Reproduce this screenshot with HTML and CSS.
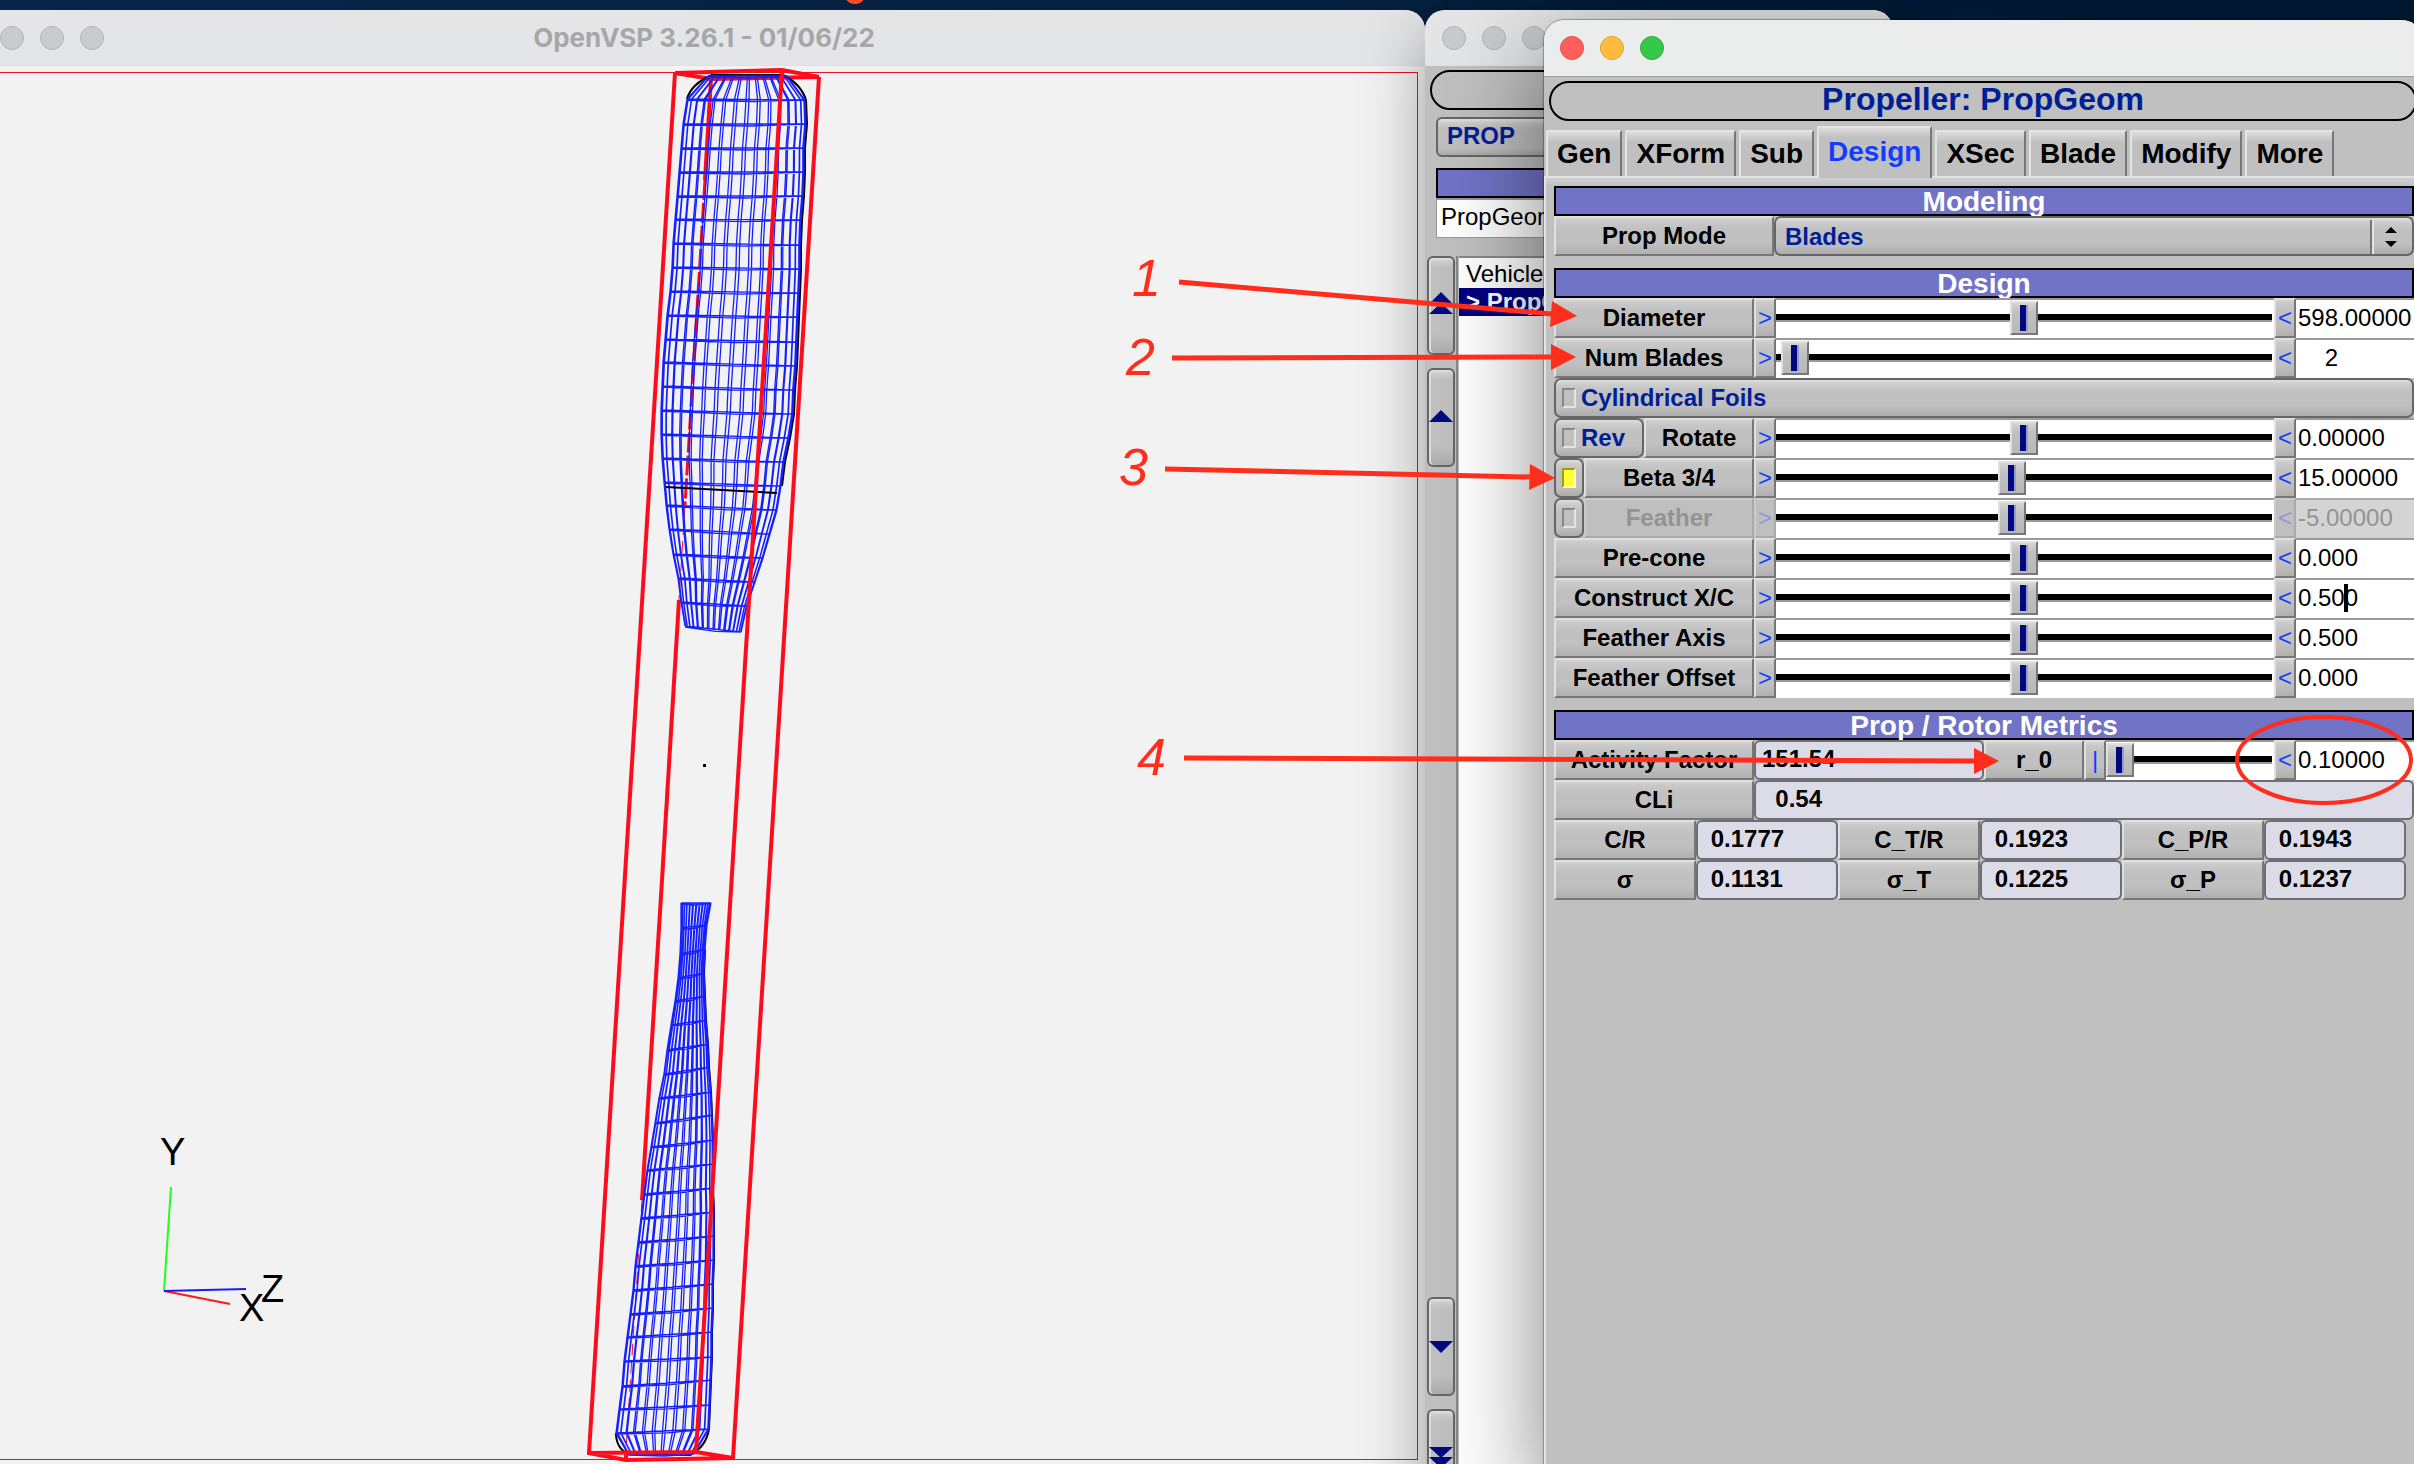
FILE: index.html
```html
<!DOCTYPE html>
<html lang="en">
<head>
<meta charset="utf-8">
<title>OpenVSP 3.26.1</title>
<link rel="stylesheet" href="styles.css">
</head>
<body>
<div class="desktop">
  <span class="menu-dot"></span>

  <section class="window scene-window">
    <header class="titlebar inactive">
      <span class="light"></span><span class="light"></span><span class="light"></span>
      <h1 class="window-title">OpenVSP 3.26.1 - 01/06/22</h1>
    </header>
    <svg class="scene" viewBox="-17 66 1442 1398" width="1442" height="1398" role="img" aria-label="Propeller wireframe">
      <rect x="-9" y="72" width="1426" height="1387" fill="none" stroke="#f01020" stroke-width="1" shape-rendering="crispEdges"/>
      <g class="box"><path d="M675 73L711 79L819 77M711 79L705 180M662 880L642 1200"/><path class="box-mid" d="M705 180L685 505"/><path d="M679 600L662 880"/><path class="box-far" d="M685 505L679 600M642 1200L626 1450"/></g>
      <g id="blades"></g>
      <g class="box">
        <path d="M675 73L782 70L819 77M675 73L589 1453L626 1460L733 1458L819 77M782 70L696 1452L733 1458M589 1453L696 1452M626 1450V1460"/>
      </g>
      <rect x="703" y="764" width="3" height="3"/>
      <g class="axes">
        <path stroke="#1fff1f" d="M164 1291L171 1187"/>
        <path stroke="#ff1a1a" d="M164 1291L230 1304"/>
        <path stroke="#1a1aff" d="M164 1291L246 1289"/>
        <text x="160" y="1165">Y</text>
        <text x="239" y="1321">X</text>
        <text x="261" y="1302">Z</text>
      </g>
    </svg>
  </section>

  <section class="window manager-window">
    <header class="titlebar inactive">
      <span class="light"></span><span class="light"></span><span class="light"></span>
    </header>
    <div class="manager-body">
      <div class="title-pill"></div>
      <div class="manager-form">
        <button class="round-button prop-type">PROP</button>
        <div class="section-title"></div>
        <input class="name-field" aria-label="Geometry name" value="PropGeom">
      </div>
      <div class="browser">
        <div class="order-buttons">
          <button class="round-button" aria-label="Move to top"><svg width="24" height="28"><path d="M0 12L12 0L24 12ZM0 22L12 11L24 22Z"/></svg></button>
          <button class="round-button" aria-label="Move up"><svg width="24" height="16"><path d="M0 12L12 0L24 12Z"/></svg></button>
          <button class="round-button push-down" aria-label="Move down"><svg width="24" height="12"><path d="M0 0L12 12L24 0Z"/></svg></button>
          <button class="round-button" aria-label="Move to bottom"><svg width="24" height="28"><path d="M0 2L12 13L24 2ZM0 12L12 23L24 12Z"/></svg></button>
        </div>
        <ul class="geom-list">
          <li>Vehicle</li>
          <li class="selected">&gt; PropGeom</li>
        </ul>
      </div>
    </div>
  </section>

  <section class="window prop-window">
    <header class="titlebar">
      <span class="light close"></span><span class="light minimize"></span><span class="light zoom"></span>
    </header>
    <div class="prop-body">
      <h2 class="title-pill">Propeller: PropGeom</h2>
      <nav class="tabs">
        <button class="tab">Gen</button><button class="tab">XForm</button><button class="tab">Sub</button><button class="tab active">Design</button><button class="tab">XSec</button><button class="tab">Blade</button><button class="tab">Modify</button><button class="tab">More</button>
      </nav>
      <div class="panel">
        <h3 class="section-title">Modeling</h3>
        <div class="row mode-row">
          <label class="cell" for="mode">Prop Mode</label>
          <div class="select-wrap">
            <select id="mode"><option>Blades</option></select>
            <svg class="select-arrows" width="42" height="36"><path d="M1 2V36" stroke="#777" stroke-width="2"/><path d="M3 2V36" stroke="#e4e4e4" stroke-width="2"/><path d="M15 15L21 9L27 15ZM15 23L21 29L27 23Z"/></svg>
          </div>
        </div>

        <h3 class="section-title spaced">Design</h3>
        <div class="row slider-row">
          <button class="cell">Diameter</button>
          <button class="cell step">&gt;</button>
          <div class="track"><input type="range" aria-label="Diameter" value="50"></div>
          <button class="cell step">&lt;</button>
          <input class="value" aria-label="Diameter value" value="598.00000">
        </div>
        <div class="row slider-row">
          <button class="cell">Num Blades</button>
          <button class="cell step">&gt;</button>
          <div class="track"><input type="range" aria-label="Num Blades" value="1"></div>
          <button class="cell step">&lt;</button>
          <input class="value" aria-label="Num Blades value" value="    2">
        </div>
        <label class="check-button wide"><input type="checkbox">Cylindrical Foils</label>
        <div class="row slider-row">
          <div class="label-pair rev"><label class="check-button"><input type="checkbox">Rev</label><button class="cell">Rotate</button></div>
          <button class="cell step">&gt;</button>
          <div class="track"><input type="range" aria-label="Rotate" value="50"></div>
          <button class="cell step">&lt;</button>
          <input class="value" aria-label="Rotate value" value="0.00000">
        </div>
        <div class="row slider-row">
          <div class="label-pair"><label class="check-button"><input type="checkbox" aria-label="Use Beta 3/4" checked></label><button class="cell">Beta 3/4</button></div>
          <button class="cell step">&gt;</button>
          <div class="track"><input type="range" aria-label="Beta 3/4" step="0.1" value="47.5"></div>
          <button class="cell step">&lt;</button>
          <input class="value" aria-label="Beta 3/4 value" value="15.00000">
        </div>
        <div class="row slider-row">
          <div class="label-pair"><label class="check-button"><input type="checkbox" aria-label="Use Feather"></label><button class="cell" disabled>Feather</button></div>
          <button class="cell step" disabled>&gt;</button>
          <div class="track"><input type="range" aria-label="Feather" step="0.1" value="47.5"></div>
          <button class="cell step" disabled>&lt;</button>
          <input class="value" aria-label="Feather value" value="-5.00000" disabled>
        </div>
        <div class="row slider-row">
          <button class="cell">Pre-cone</button>
          <button class="cell step">&gt;</button>
          <div class="track"><input type="range" aria-label="Pre-cone" value="50"></div>
          <button class="cell step">&lt;</button>
          <input class="value" aria-label="Pre-cone value" value="0.000">
        </div>
        <div class="row slider-row">
          <button class="cell">Construct X/C</button>
          <button class="cell step">&gt;</button>
          <div class="track"><input type="range" aria-label="Construct X/C" value="50"></div>
          <button class="cell step">&lt;</button>
          <div class="editing"><input class="value" aria-label="Construct X/C value" value="0.500"><span class="caret"></span></div>
        </div>
        <div class="row slider-row">
          <button class="cell">Feather Axis</button>
          <button class="cell step">&gt;</button>
          <div class="track"><input type="range" aria-label="Feather Axis" value="50"></div>
          <button class="cell step">&lt;</button>
          <input class="value" aria-label="Feather Axis value" value="0.500">
        </div>
        <div class="row slider-row">
          <button class="cell">Feather Offset</button>
          <button class="cell step">&gt;</button>
          <div class="track"><input type="range" aria-label="Feather Offset" value="50"></div>
          <button class="cell step">&lt;</button>
          <input class="value" aria-label="Feather Offset value" value="0.000">
        </div>

        <h3 class="section-title spaced">Prop / Rotor Metrics</h3>
        <div class="row activity-row">
          <span class="cell">Activity Factor</span>
          <output class="result">151.54</output>
          <button class="cell">r_0</button>
          <button class="cell step">|</button>
          <div class="track"><input type="range" aria-label="r_0" value="0"></div>
          <button class="cell step">&lt;</button>
          <input class="value" aria-label="r_0 value" value="0.10000">
        </div>
        <div class="row cli-row">
          <span class="cell">CLi</span>
          <output class="result">  0.54</output>
        </div>
        <div class="row metric-grid">
          <span class="cell">C/R</span><output class="result"> 0.1777</output>
          <span class="cell">C_T/R</span><output class="result"> 0.1923</output>
          <span class="cell">C_P/R</span><output class="result"> 0.1943</output>
          <span class="cell">σ</span><output class="result"> 0.1131</output>
          <span class="cell">σ_T</span><output class="result"> 0.1225</output>
          <span class="cell">σ_P</span><output class="result"> 0.1237</output>
        </div>
      </div>
    </div>
  </section>

  <svg class="notes" width="2414" height="1464" viewBox="0 0 2414 1464">
    <path d="M1179 282L1552 314M1172 358L1552 357M1165 469L1531 477M1184 758L1976 761"/>
    <ellipse cx="2324" cy="760" rx="87" ry="43"/>
    <g class="heads"><path d="M1552 301L1577 316L1550 327ZM1551 344L1576 357L1551 370ZM1530 464L1555 478L1529 490ZM1974 748L1999 761L1974 774Z"/></g>
    <text x="1132" y="296">1</text>
    <text x="1126" y="375">2</text>
    <text x="1119" y="485">3</text>
    <text x="1137" y="775">4</text>
  </svg>
</div>
<script src="script.js"></script>
</body>
</html>
```
FILE: styles.css
```css
* { box-sizing: border-box; }
body {
  margin: 0;
  font-family: "Liberation Sans", Arial, sans-serif;
  font-size: 24px;
  color: #000;
}
h1, h2, h3, ul { margin: 0; padding: 0; }
button, input, select { margin: 0; font: inherit; color: inherit; border-radius: 0; }

.desktop {
  position: relative;
  height: 100vh;
  overflow: hidden;
  background: linear-gradient(90deg, #07264a, #06203f 50%, #001935);
}
.menu-dot {
  position: absolute;
  top: -18px;
  left: 844px;
  width: 22px;
  height: 22px;
  border-radius: 50%;
  background: #ff4a2e;
}

/* Windows */
.window {
  position: absolute;
  display: flex;
  flex-direction: column;
  overflow: hidden;
  border-radius: 20px;
  background: #c0c0c0;
}
.scene-window { top: 10px; left: -17px; width: 1442px; bottom: -20px; background: #f2f2f2; }
.manager-window {
  top: 10px;
  left: 1425px;
  width: 468px;
  bottom: -60px;
  box-shadow: 0 24px 64px rgba(0, 0, 0, .35);
}
.prop-window {
  top: 20px;
  left: 1544px;
  right: -8px;
  bottom: -20px;
  box-shadow: 0 0 1px 1px rgba(0, 0, 0, .3), 0 30px 100px rgba(0, 0, 0, .5);
}
.titlebar {
  position: relative;
  display: flex;
  align-items: center;
  flex: none;
  gap: 16px;
  height: 57px;
  padding: 0 16px;
  background: #ebedec;
  border-bottom: 1px solid #a0a0a0;
}
.titlebar.inactive { height: 56px; padding: 0 17px; background: #e4e5e7; border-bottom-color: #e0e0e0; }
.light {
  width: 24px;
  height: 24px;
  border-radius: 50%;
  background: #cacbcd;
  border: 1px solid #b2b3b5;
}
.light.close { background: #ff5f5a; border-color: #e2504b; }
.light.minimize { background: #ffbb40; border-color: #e0a030; }
.light.zoom { background: #35c84b; border-color: #2bab3c; }
.window-title {
  position: absolute;
  left: 0;
  right: 0;
  text-align: center;
  font: 700 26px/32px Inter, sans-serif;
  color: #a6a7a9;
}

/* 3D view */
.scene { display: block; flex: none; }
.box path { fill: none; stroke: #ff0c1c; stroke-width: 4; }
.box .box-mid { stroke-width: 3; stroke-dasharray: 20 3; }
.box .box-far { stroke-width: 1; stroke-dasharray: 12 6; }
.mesh { fill: none; stroke: #1620ff; stroke-width: 1.3; }
.outline { fill: none; stroke: #000; stroke-width: 2; }
.axes path { fill: none; stroke-width: 2; }
.axes text { font-size: 38px; }

/* Geometry manager */
.manager-body { display: flex; flex-direction: column; flex: 1; padding: 4px 4px 16px 0; }
.title-pill {
  flex: none;
  height: 40px;
  margin: 0 5px;
  border: 2px solid #000;
  border-radius: 20px;
  text-align: center;
  font-weight: bold;
  font-size: 32px;
  line-height: 33px;
  color: #001e96;
}
.manager-form { display: flex; flex-direction: column; padding: 7px 11px 0; }
.round-button {
  border: 2px solid #666;
  border-radius: 6px;
  background: linear-gradient(#e4e4e4, #cdcdcd 4px, #c0c0c0 10px, #c0c0c0 80%, #acacac);
  padding: 0;
}
.prop-type {
  height: 40px;
  margin-bottom: 11px;
  padding: 0 9px 2px;
  text-align: left;
  font-weight: bold;
  color: #001e96;
}
.name-field { height: 40px; border: 1px solid #999; border-top-width: 2px; padding: 0 4px 3px; background: #fff; }
.browser { display: flex; flex: 1; gap: 1px; margin-top: 18px; }
.order-buttons { display: flex; flex-direction: column; gap: 13px; width: 33px; padding: 0 1px 0 2px; border-right: 2px solid #888; }
.order-buttons .round-button { display: flex; align-items: center; justify-content: center; height: 99px; box-shadow: inset 2px 0 #ddd; }
.order-buttons svg { flex: none; fill: #000a80; }
.push-down { margin-top: auto; }
.geom-list { flex: 1; list-style: none; background: #fff; border-top: 2px solid #888; padding-top: 2px; }
.geom-list li { height: 28px; padding-left: 7px; line-height: 28px; }
.geom-list .selected { background: #00007f; color: #fff; font-weight: bold; }

/* Propeller editor */
.prop-body { display: flex; flex-direction: column; flex: 1; padding-top: 4px; }
.tabs { display: flex; align-items: flex-end; gap: 3px; height: 55px; padding-left: 2px; }
.tab {
  height: 46px;
  padding: 0 9px;
  border: 2px solid #e4e4e4;
  border-right-color: #777;
  border-bottom: 0;
  background: linear-gradient(#dcdcdc, #c0c0c0 10px);
  font-weight: bold;
  font-size: 28px;
  line-height: 44px;
}
.tab.active { position: relative; height: 52px; margin-bottom: -2px; padding-bottom: 3px; color: #143cff; }
.panel {
  flex: 1;
  padding: 8px 8px 0;
  border-top: 2px solid #e4e4e4;
  border-left: 2px solid #e4e4e4;
  background: linear-gradient(#d0d0d0, #c0c0c0 8px);
}
.section-title {
  height: 30px;
  border: 2px solid #000;
  background: #7173c6;
  text-align: center;
  font-size: 28px;
  line-height: 28px;
  color: #fff;
}
.section-title.spaced { margin-top: 12px; }
.row { display: grid; }
.mode-row { grid-template-columns: 220px 1fr; }
.slider-row { grid-template-columns: 200px 22px 1fr 22px 118px; }
.activity-row { grid-template-columns: 200px 230px 100px 22px 1fr 22px 118px; }
.cli-row { grid-template-columns: 200px 1fr; }
.metric-grid { grid-template-columns: repeat(6, 1fr); padding-right: 8px; }
.cell {
  display: block;
  height: 40px;
  padding: 0;
  border: 2px solid #e0e0e0;
  border-right-color: #777;
  border-bottom-color: #777;
  background: linear-gradient(#d2d2d2, #c8c8c8 4px, #c0c0c0 12px, #c0c0c0 24px, #b0b0b0);
  text-align: center;
  font-weight: bold;
  line-height: 36px;
  white-space: nowrap;
}
.cell:disabled { color: #939393; border-color: #cacaca; border-right-color: #aaa; border-bottom-color: #aaa; background: #bfbfbf; }
.step { font-weight: normal; color: #143cff; }
.step:disabled { color: #9496dc; }
.label-pair { display: grid; grid-template-columns: 30px 1fr; }
.label-pair.rev { grid-template-columns: 90px 1fr; }
.check-button {
  display: flex;
  align-items: center;
  gap: 5px;
  height: 40px;
  padding-left: 6px;
  border: 2px solid #666;
  border-radius: 7px;
  background: linear-gradient(#e0e0e0, #cdcdcd 4px, #c0c0c0 12px, #c0c0c0 26px, #acacac);
  font-weight: bold;
  color: #001e96;
}
input[type=checkbox] {
  appearance: none;
  flex: none;
  width: 14px;
  height: 20px;
  border: 2px solid #888;
  border-right-color: #e4e4e4;
  border-bottom-color: #e4e4e4;
}
input[type=checkbox]:checked { background: #ffff38; border-color: #a09a20; border-right-color: #ffffa8; border-bottom-color: #ffffa8; }
.select-wrap { position: relative; display: grid; height: 40px; }
.select-wrap select {
  appearance: none;
  width: 100%;
  height: 40px;
  padding: 0 9px;
  border: 2px solid #666;
  border-radius: 7px;
  background: linear-gradient(#e0e0e0, #cdcdcd 4px, #c0c0c0 12px, #c0c0c0 26px, #acacac);
  font-weight: bold;
  color: #001e96;
}
.select-arrows { position: absolute; right: 2px; top: 2px; pointer-events: none; }
.track { height: 40px; padding-right: 2px; border-top: 2px solid #999; background: #fff; }
input[type=range] {
  appearance: none;
  display: block;
  width: 100%;
  height: 36px;
  background: linear-gradient(#000 0 6px, #999 6px 8px) 0 14px / 100% 8px no-repeat;
}
input[type=range]::-webkit-slider-thumb {
  appearance: none;
  width: 28px;
  height: 34px;
  border: 2px solid #e0e0e0;
  border-right-color: #777;
  border-bottom-color: #777;
  background:
    linear-gradient(90deg, #000880 0 6px, #9a9ad0 6px 8px) 8px 2px / 8px 26px no-repeat,
    linear-gradient(#d4d4d4, #c0c0c0 10px, #b8b8b8);
}
.value {
  width: 100%;
  height: 40px;
  padding: 0 0 3px 2px;
  border: 0;
  border-top: 2px solid #999;
  background: #fff;
}
.value:disabled { background: #d4d4d4; color: #939393; border-color: #aaa; }
.editing { position: relative; }
.caret { position: absolute; left: 48px; top: 6px; width: 4px; height: 28px; background: #000; }
.result {
  height: 40px;
  padding-left: 6px;
  border: 2px solid #6e6e74;
  border-radius: 6px;
  background: #dcdce8;
  font-weight: bold;
  line-height: 34px;
  white-space: pre;
}

/* Annotations */
.notes { position: absolute; top: 0; left: 0; pointer-events: none; fill: none; stroke: #ff2d1c; stroke-width: 5; }
.notes ellipse { stroke-width: 4; }
.notes .heads, .notes text { fill: #ff2d1c; stroke: none; }
.notes text { font-size: 52px; font-style: italic; }
```
FILE: script.js
```js
// Each station is one ring of the blade: left x, left y, right x, right y.
const upper = [
  [708,76,787,76],[687,99,805,100],[683,124,806,124],[681,148,804,148],[679,172,804,172],
  [677,196,803,196],[675,219,801,220],[673,243,800,245],[672,267,800,269],[670,291,799,293],
  [667,315,798,317],[665,339,797,342],[663,362,796,366],[662,386,794,390],[661,410,793,414],
  [661,434,789,438],[662,458,784,462],[664,482,781,486],[666,505,777,510],[669,529,770,534],
  [673,554,763,558],[678,578,755,582],[681,602,747,606],[685,626,741,632]
];
const lower = [
  [681,903,711,903],[681,928,707,925],[680,954,705,949],[678,978,704,973],[675,1001,705,996],
  [671,1025,706,1020],[667,1050,708,1044],[664,1074,709,1067],[659,1098,711,1092],[655,1123,712,1115],
  [651,1147,713,1140],[647,1170,713,1164],[644,1194,713,1188],[641,1218,714,1212],[638,1242,714,1236],
  [635,1266,714,1260],[633,1290,713,1284],[630,1314,713,1308],[627,1337,712,1332],[624,1361,712,1357],
  [622,1386,711,1380],[619,1409,710,1405],[616,1433,709,1429],[628,1454,694,1454]
];

function poly(points) {
  return 'M' + points.map(p => p[0].toFixed(1) + ' ' + p[1].toFixed(1)).join('L');
}
function at(s, t) {
  return [s[0] + (s[2] - s[0]) * t, s[1] + (s[3] - s[1]) * t];
}
function mesh(stations, count, shift) {
  let d = '';
  for (let i = 0; i <= count; i++) {
    const t = (1 - Math.cos(Math.PI * i / count)) / 2;
    d += poly(stations.map(s => at(s, t)));
    const u = t + shift * Math.sin(Math.PI * t);
    d += poly(stations.map(s => at(s, u)));
  }
  for (const s of stations) {
    const mid = at(s, 0.55);
    d += poly([[s[0], s[1]], [s[2], s[3]]]);
    d += poly([[s[0], s[1] + 1], [mid[0], mid[1] + 2], [s[2], s[3]]]);
  }
  return d;
}
document.getElementById('blades').innerHTML =
  '<path class="outline" d="' + poly(upper.slice(1, 18).map(s => [s[2] + 1, s[3]])) +
  'M687 99Q691 84 712 75L783 75Q801 84 806 100"/>' +
  '<path class="outline" d="' + poly(lower.slice(2).map(s => [s[2], s[3]]).slice(0, 21)) +
  'M616 1433Q616 1448 628 1454L690 1455Q706 1447 709 1429"/>' +
  '<path class="mesh" d="' + mesh(upper, 16, 0.025) + '"/>' +
  '<path class="mesh" d="' + mesh(lower, 14, 0.03) + '"/>' +
  '<path class="outline" d="M666 487L777 493"/>';
```
